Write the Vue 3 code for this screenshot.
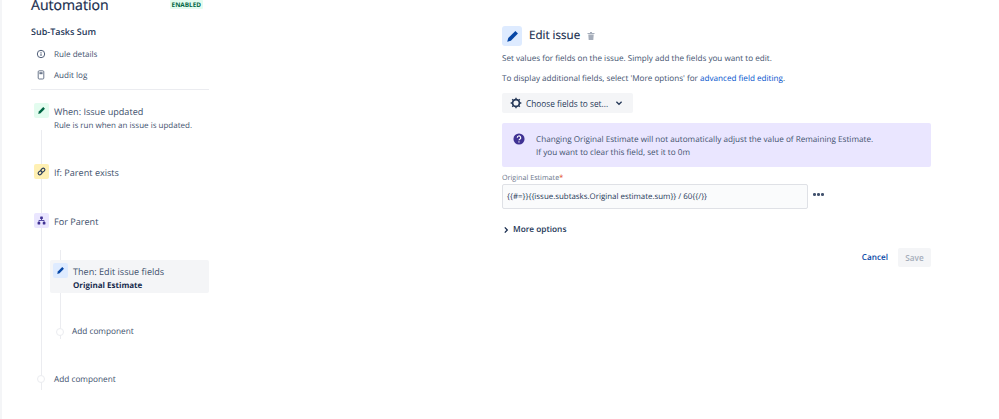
<template>
  <div class="page">
    <aside class="side">
      <div class="head">
        <h1>Automation</h1>
        <span class="lozenge">ENABLED</span>
      </div>
      <h2>Sub-Tasks Sum</h2>
      <div class="nav">
        <svg viewBox="0 0 12 12" class="navicon"><circle cx="6" cy="6" r="3.7" fill="none" stroke="#505f79" stroke-width="1"/><rect x="5.5" y="5.4" width="1" height="2.6" fill="#505f79"/><rect x="5.5" y="3.9" width="1" height="1" fill="#505f79"/></svg>
        <span>Rule details</span>
      </div>
      <div class="nav second">
        <svg viewBox="0 0 12 12" class="navicon"><rect x="3.2" y="1.8" width="5.6" height="8.2" rx="1" fill="none" stroke="#6b778c" stroke-width="1"/><rect x="4.4" y="3.2" width="3.2" height="2" fill="#6b778c"/></svg>
        <span>Audit log</span>
      </div>
      <div class="rule"></div>

      <div class="flow">
        <span class="line main"></span>
        <span class="line sub"></span>

        <div class="step when">
          <span class="badge green"><svg viewBox="0 0 14 14"><path d="M9.2 2.6l2.2 2.2-5.6 5.7-2.9.8.7-3z" fill="#006644"/></svg></span>
          <div>
            <div class="title">When: Issue updated</div>
            <div class="desc">Rule is run when an issue is updated.</div>
          </div>
        </div>

        <div class="step cond">
          <span class="badge yellow"><svg viewBox="0 0 14 14"><g fill="none" stroke="#253858" stroke-width="1.4" transform="rotate(-45 7 7)"><rect x="1.8" y="5" width="5.6" height="4" rx="2"/><rect x="6.6" y="5" width="5.6" height="4" rx="2"/></g></svg></span>
          <div class="title">If: Parent exists</div>
        </div>

        <div class="step branch">
          <span class="badge purple"><svg viewBox="0 0 14 14"><g fill="#403294"><rect x="5.3" y="2" width="3.4" height="3.2" rx=".5"/><rect x="2" y="8.8" width="3.4" height="3.2" rx=".5"/><rect x="8.6" y="8.8" width="3.4" height="3.2" rx=".5"/></g><path d="M7 5v2H3.7v2M7 7h3.3v2" fill="none" stroke="#403294" stroke-width="1.1"/></svg></span>
          <div class="title">For Parent</div>
        </div>

        <div class="selected">
          <span class="badge blue"><svg viewBox="0 0 14 14"><path d="M9.2 2.6l2.2 2.2-5.6 5.7-2.9.8.7-3z" fill="#0747a6"/></svg></span>
          <div>
            <div class="title">Then: Edit issue fields</div>
            <div class="strong">Original Estimate</div>
          </div>
        </div>

        <div class="add inner"><i></i><span>Add component</span></div>
        <div class="add outer"><i></i><span>Add component</span></div>
      </div>
    </aside>

    <main class="panel">
      <div class="panel-head">
        <span class="bigbadge"><svg viewBox="0 0 20 20"><path d="M13.4 3.6l3 3-8.3 8.4-4.3 1.2 1.2-4.4z" fill="#0747a6"/></svg></span>
        <h3>Edit issue</h3>
        <svg class="trash" viewBox="0 0 10 10"><path d="M1.5 2h7v1h-7zM4 1h2v1H4zM2.3 3.4h5.4l-.4 5.6H2.7z" fill="#a5adba"/></svg>
      </div>
      <p class="p1">Set values for fields on the issue. Simply add the fields you want to edit.</p>
      <p class="p2">To display additional fields, select 'More options' for <a>advanced field editing</a>.</p>
      <button class="choose">
        <svg class="cog" viewBox="0 0 14 14"><circle cx="7" cy="7" r="4" fill="none" stroke="#253858" stroke-width="2"/><path d="M7 .8v2.4M7 10.8v2.4M.8 7h2.4M10.8 7h2.4M2.6 2.6l1.7 1.7M9.7 9.7l1.7 1.7M2.6 11.4l1.7-1.7M9.7 4.3l1.7-1.7" stroke="#253858" stroke-width="1.6"/></svg>
        <span>Choose fields to set...</span>
        <svg class="chev" viewBox="0 0 8 8"><path d="M1.4 2.8L4 5.3l2.6-2.5" fill="none" stroke="#253858" stroke-width="1.3"/></svg>
      </button>
      <div class="notice">
        <svg class="q" viewBox="0 0 14 14"><circle cx="7" cy="7" r="6.5" fill="#403294"/><path d="M5 5.5a2 2 0 1 1 3 1.7c-.7.4-1 .7-1 1.4" fill="none" stroke="#fff" stroke-width="1.4"/><rect x="6.2" y="9.6" width="1.5" height="1.5" rx=".7" fill="#fff"/></svg>
        <div>
          <div>Changing Original Estimate will not automatically adjust the value of Remaining Estimate.</div>
          <div>If you want to clear this field, set it to 0m</div>
        </div>
      </div>
      <label class="lbl">Original Estimate<em>*</em></label>
      <div class="field-row">
        <div class="input">{{ fieldValue }}</div>
        <span class="dots"><i></i><i></i><i></i></span>
      </div>
      <div class="more">
        <svg viewBox="0 0 8 8"><path d="M2.8 1.4L5.3 4 2.8 6.6" fill="none" stroke="#172b4d" stroke-width="1.3"/></svg>
        <span>More options</span>
      </div>
      <div class="actions">
        <a>Cancel</a>
        <button class="save">Save</button>
      </div>
    </main>
  </div>
</template>

<script setup>
const fieldValue = '{{#=}}{{issue.subtasks.Original estimate.sum}} / 60{{/}}'
</script>

<style>
html, body { margin: 0; background: #fff; }
</style>

<style scoped>
.page {
  width: 999px;
  height: 419px;
  overflow: hidden;
  display: flex;
  box-sizing: border-box;
  border-left: 2px solid #f4f5f7;
  font-family: "Open Sans", "Noto Sans", sans-serif;
  text-rendering: geometricPrecision;
  color: #42526e;
  font-size: 8.1px;
}
.side { width: 178px; margin-left: 29px; flex: none; }
.head { display: flex; justify-content: space-between; height: 14px; margin-top: -3px; align-items: flex-start; width: 172px; }
h1 { margin: 0; font-size: 14.1px; line-height: 18px; font-weight: 400; color: #172b4d; -webkit-text-stroke: .2px #172b4d; }
.lozenge { font-size: 6.4px; line-height: 9px; font-weight: 700; color: #006644; background: #e3fcef; padding: 0 2px; border-radius: 1px; margin-top: 3px; }
h2 { margin: 14px 0 0; font-size: 9px; line-height: 14px; font-weight: 600; color: #253858; }
.nav { display: flex; align-items: center; height: 14px; margin-top: 8px; padding-left: 4px; gap: 7px; }
.nav.second { margin-top: 7px; }
.navicon { width: 12px; height: 12px; flex: none; }
.rule { height: 1px; background: #ebecf0; margin-top: 7px; }
.flow { position: relative; height: 320px; }
.line { position: absolute; width: 1px; background: #ebecf0; }
.line.main { left: 10px; top: 27px; height: 260px; }
.line.sub { left: 29px; top: 147px; height: 89px; background: #ebecf0; }
.step { display: flex; gap: 5px; position: relative; }
.badge { width: 15px; height: 15px; border-radius: 2px; display: flex; align-items: center; justify-content: center; flex: none; }
.badge svg { width: 11px; height: 11px; }
.green { background: #e3fcef; }
.yellow { background: #fff0b3; }
.purple { background: #eae6ff; }
.blue { background: #deebff; }
.title { font-size: 9.1px; line-height: 13px; color: #42526e; white-space: nowrap; margin-top: 2px; }
.desc { font-size: 8px; line-height: 13px; color: #42526e; white-space: nowrap; }
.when { margin: 13px 0 0 3px; }
.when .title { line-height: 15px; margin-top: 1px; }
.cond { margin: 32px 0 0 3px; }
.branch { margin: 34px 0 0 3px; }
.selected {
  position: relative;
  display: flex;
  gap: 5px;
  margin: 32px 0 0 19px;
  width: 159px;
  height: 33px;
  box-sizing: border-box;
  padding: 3px 0 0 3px;
  background: #f4f5f7;
  border-radius: 2px;
}
.selected .title { line-height: 14px; }
.strong { font-size: 8px; line-height: 13px; font-weight: 700; color: #172b4d; white-space: nowrap; }
.add { position: relative; display: flex; align-items: center; font-size: 8.25px; line-height: 14px; white-space: nowrap; }
.add i { position: absolute; width: 6px; height: 6px; border: 1px solid #ebecf0; border-radius: 50%; background: #fff; }
.inner { margin: 32px 0 0 41px; }
.inner i { left: -16px; }
.outer { margin: 34px 0 0 23px; }
.outer i { left: -17px; top: 2px; }

.panel { width: 429px; margin-left: 293px; flex: none; padding-top: 26px; }
.panel-head { display: flex; align-items: center; height: 20px; }
.bigbadge { width: 20px; height: 20px; background: #deebff; border-radius: 3px; display: flex; align-items: center; justify-content: center; }
.bigbadge svg { width: 17px; height: 17px; }
h3 { margin: 0 0 0 7px; font-size: 11.6px; line-height: 20px; font-weight: 400; color: #172b4d; -webkit-text-stroke: .15px #172b4d; }
.trash { width: 10px; height: 10px; margin-left: 6px; }
p { margin: 0; font-size: 8.15px; line-height: 13px; white-space: nowrap; color: #42526e; }
.p1 { margin-top: 6px; }
.p2 { margin-top: 7px; }
.p2 a { color: #0052cc; }
.choose {
  display: flex;
  align-items: center;
  width: 131px;
  height: 20px;
  margin-top: 8px;
  padding: 0 0 0 8px;
  border: 0;
  border-radius: 2px;
  background: #f4f5f7;
  font: inherit;
  font-size: 8.3px;
  color: #253858;
}
.cog { width: 12px; height: 12px; margin-right: 4px; }
.chev { width: 8px; height: 8px; margin-left: 7px; }
.notice {
  display: flex;
  gap: 11px;
  margin-top: 10px;
  height: 44px;
  box-sizing: border-box;
  padding: 11px 0 0 11px;
  background: #eae6ff;
  border-radius: 2px;
  font-size: 8.17px;
  line-height: 12.5px;
  white-space: nowrap;
}
.q { width: 12px; height: 12px; margin-top: -1px; flex: none; }
.lbl { display: block; margin-top: 5px; font-size: 7.2px; line-height: 12px; font-weight: 400; color: #6b778c; }
.lbl em { color: #de350b; font-style: normal; }
.field-row { display: flex; align-items: flex-start; }
.input {
  width: 306px;
  height: 25px;
  box-sizing: border-box;
  border: 1px solid #dfe1e6;
  border-radius: 2px;
  background: #fafbfc;
  padding-left: 4px;
  font-size: 7.9px;
  line-height: 25px;
  color: #253858;
  white-space: nowrap;
}
.dots { display: flex; gap: 1.5px; margin: 9px 0 0 5px; }
.dots i { width: 2.6px; height: 2.6px; border-radius: 50%; background: #42526e; }
.more { display: flex; align-items: center; gap: 3px; margin-top: 14px; font-size: 8.3px; font-weight: 600; line-height: 14px; color: #253858; }
.more svg { width: 8px; height: 8px; }
.actions { display: flex; justify-content: flex-end; align-items: center; gap: 10px; margin-top: 11px; font-size: 8.2px; font-weight: 600; }
.actions a { color: #0747a6; }
.save {
  width: 33px;
  height: 19px;
  padding: 0;
  border: 0;
  border-radius: 2px;
  background: #f4f5f7;
  color: #a5adba;
  font: inherit;
}
</style>
